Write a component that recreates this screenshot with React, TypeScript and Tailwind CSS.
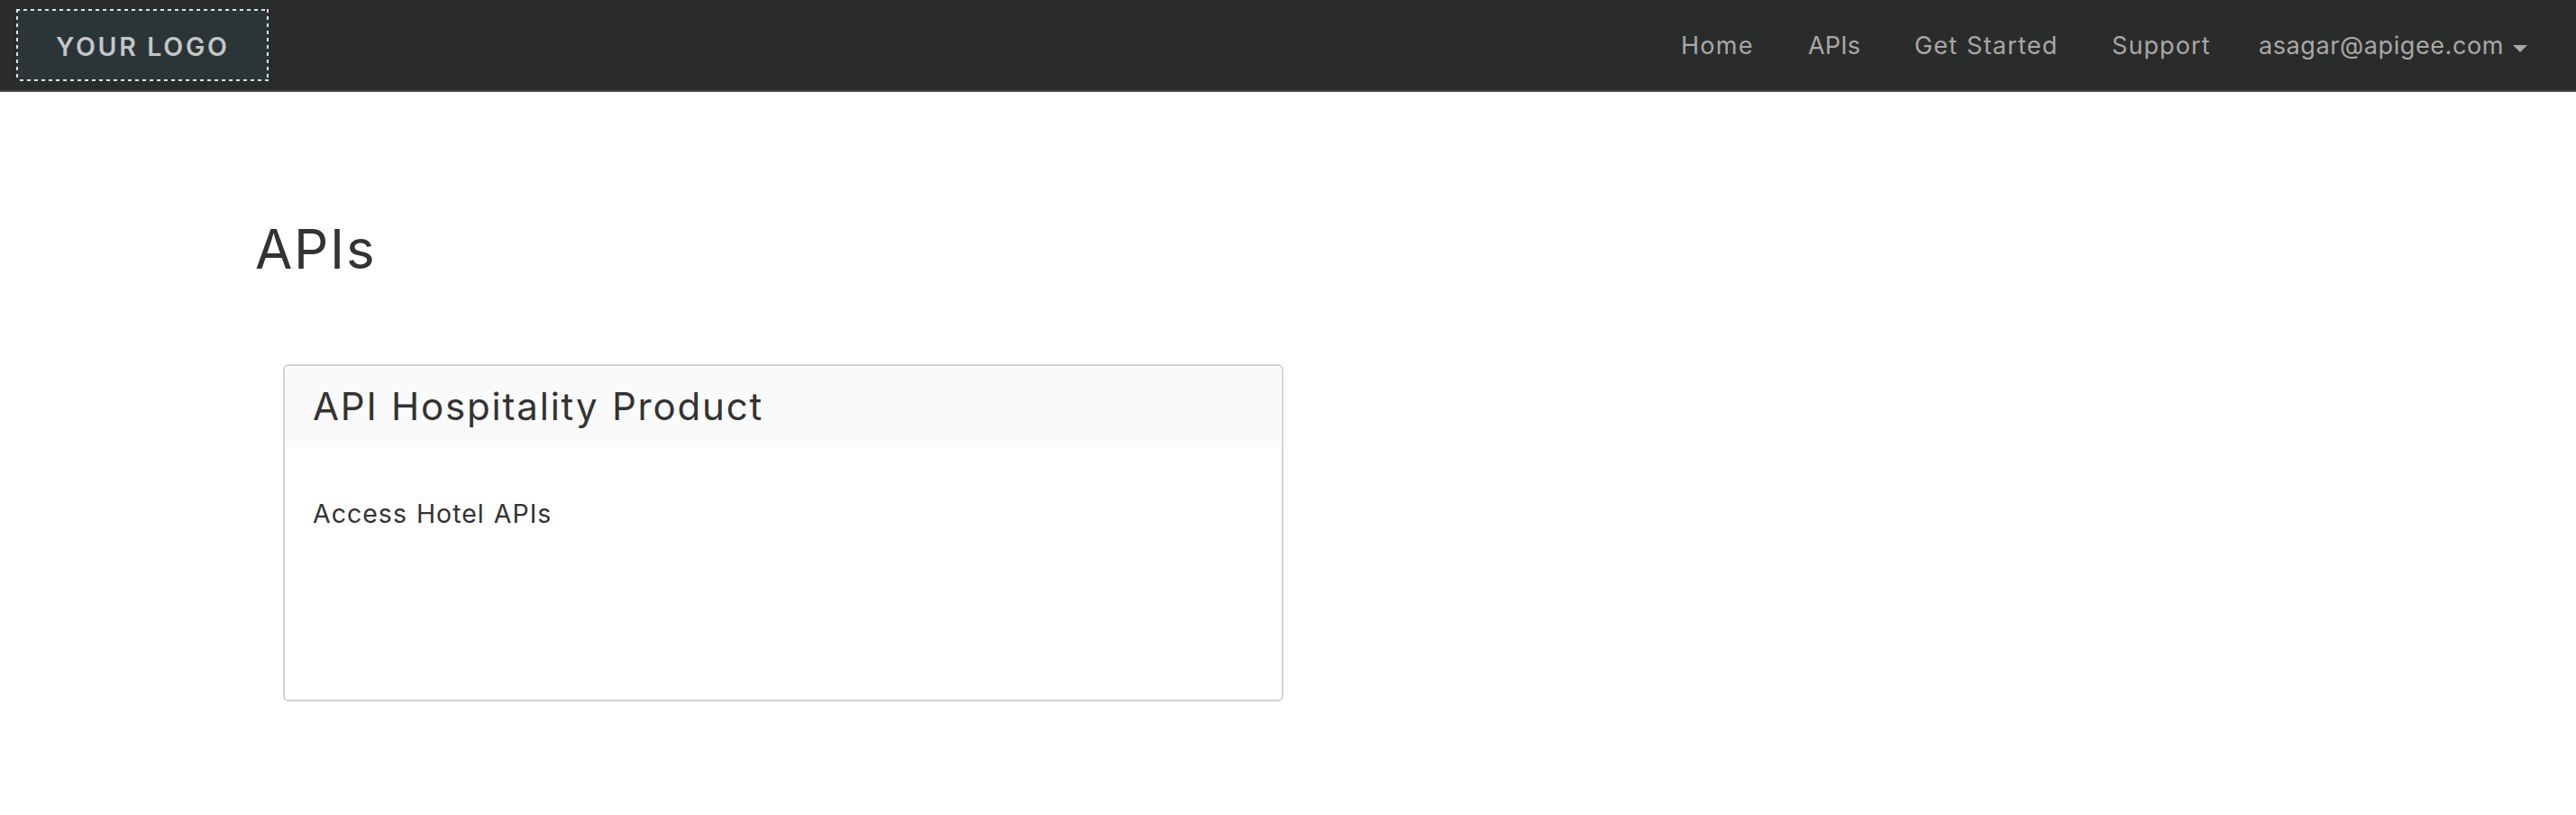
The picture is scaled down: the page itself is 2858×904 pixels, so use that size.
import React from "react";

const links = [
  { label: "Home", cls: "w-[141px] tracking-[1.3px]" },
  { label: "APIs", cls: "w-[118px] tracking-[0.2px]" },
  { label: "Get Started", cls: "w-[219px] tracking-[1.2px] [word-spacing:1px]" },
  { label: "Support", cls: "w-[163px] tracking-[1.1px]" },
];

function Logo() {
  return (
    <a className="relative ml-[18px] flex h-20 w-[280px] items-center bg-[#2b3436] pt-[3px] pl-[44px]">
      <svg className="absolute inset-0" width="280" height="80" fill="none" stroke="#dfe3e3" strokeWidth="2">
        <path d="M0 1H280M4 79H280" strokeDasharray="4 4" />
        <path d="M1 0V80M279 0V80" strokeDasharray="4 4" />
      </svg>
      <span className="whitespace-nowrap text-[28.5px] leading-8 font-semibold tracking-[2.7px] text-[#c3c6c7]">YOUR LOGO</span>
    </a>
  );
}

export default function App() {
  return (
    <div className="h-[904px] w-[2858px] overflow-hidden bg-white font-['Inter','Liberation_Sans',sans-serif] text-[#333333]">
      <header className="flex h-[102px] items-center justify-between border-b-2 border-[#4a4b4b] bg-[#2a2c2b]">
        <Logo />
        <nav className="flex w-[993px] items-center pt-[2px] text-[27px] leading-8 whitespace-nowrap text-[#a8a8a8]">
          {links.map((l) => (
            <a key={l.label} className={l.cls}>{l.label}</a>
          ))}
          <a className="flex items-center">
            <span className="w-[282px] tracking-[0.6px]">asagar@apigee.com</span>
            <svg className="mt-[5px]" width="16" height="8" fill="currentColor"><path d="M0 0H16L8 8Z" /></svg>
          </a>
        </nav>
      </header>
      <main className="pt-[134px] pl-[283px]">
        <h1 className="text-[60px] leading-[80px] font-normal tracking-[1.7px]">APIs</h1>
        <section className="mt-[88px] ml-[31px] h-[374px] w-[1110px] rounded-[6px] border-2 border-[#d2d2d2]">
          <h2 className="flex h-[90px] items-center rounded-t-[4px] bg-[#fafafa] pb-px pl-[31px] text-[42px] font-normal tracking-[1.8px] [word-spacing:1px]">API Hospitality Product</h2>
          <p className="mt-[54px] pl-[31px] text-[28.5px] leading-10 tracking-[1px] [word-spacing:1px]">Access Hotel APIs</p>
        </section>
      </main>
    </div>
  );
}
